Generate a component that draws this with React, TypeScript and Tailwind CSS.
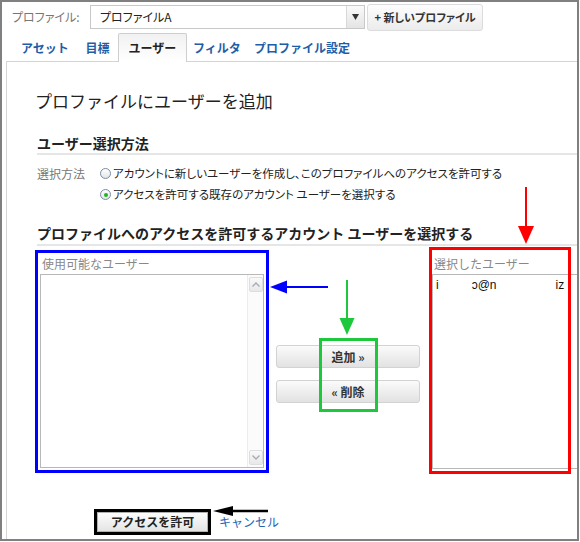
import React from "react";

function Radio({ checked }: { checked?: boolean }) {
  return (
    <span className="flex h-[11px] w-[11px] shrink-0 items-center justify-center rounded-full border border-[#7b8ca3] bg-linear-to-b from-white to-[#e2e5e9]">
      {checked && <span className="h-[4px] w-[4px] rounded-full bg-[#1fb51f]" />}
    </span>
  );
}

function Chevron({ up }: { up?: boolean }) {
  return (
    <svg width="8" height="5" viewBox="0 0 8 5">
      <path
        d={up ? "M0.5 4.5L4 1L7.5 4.5" : "M0.5 0.5L4 4L7.5 0.5"}
        fill="none"
        stroke="#a3acb6"
        strokeWidth="1.3"
      />
    </svg>
  );
}

export default function App() {
  return (
    <div className="h-[542px] w-[580px] bg-white">
      <div className="flex h-[541px] w-[579px] flex-col overflow-hidden border-2 border-[#808080] bg-white font-['Noto_Sans_CJK_JP',sans-serif]">
        {/* header */}
        <div className="flex h-[30px] shrink-0 items-center pl-[10px]">
          <span className="w-[78px] text-[12px] text-[#777] [font-feature-settings:'palt']">プロファイル:</span>
          <div className="flex h-[24px] w-[275px] border border-[#c8c8c8]">
            <div className="flex-1 pl-[9px] text-[12px] leading-[22px] text-[#222] [font-feature-settings:'palt']">プロファイルA</div>
            <div className="flex w-[18px] items-center justify-center border-l border-[#d8d8d8] bg-linear-to-b from-[#fafafa] to-[#e4e4e4]">
              <svg width="7" height="6" viewBox="0 0 7 6">
                <path d="M0 0h7L3.5 6z" fill="#333" />
              </svg>
            </div>
          </div>
          <button className="ml-[2px] h-[27px] w-[116px] rounded-[3px] border border-[#dcdcdc] bg-linear-to-b from-[#fdfdfd] to-[#ececec] text-[11px] font-bold text-[#333] [font-feature-settings:'palt']">
            + 新しいプロファイル
          </button>
        </div>

        {/* tabs */}
        <div className="relative z-10 -mb-px flex h-[30px] shrink-0 items-end pl-[11px] text-[12px] font-bold">
          <div className="flex h-[29px] w-[64px] items-center justify-center text-[#1f5ea6]">アセット</div>
          <div className="flex h-[29px] w-[41px] items-center justify-center text-[#1f5ea6]">目標</div>
          <div className="flex h-[29px] w-[69px] items-center justify-center rounded-t-[2px] border border-b-0 border-[#cfcfcf] bg-linear-to-b from-[#f1f1f1] to-white text-[#222]">ユーザー</div>
          <div className="flex h-[29px] w-[60px] items-center justify-center text-[#1f5ea6]">フィルタ</div>
          <div className="flex h-[29px] w-[110px] items-center justify-center text-[#1f5ea6]">プロファイル設定</div>
        </div>

        {/* panel */}
        <div className="ml-[4px] flex flex-1 flex-col border-l border-t border-[#d4d4d4] pl-[28px]">
          <div className="mt-[27px] text-[17px] leading-[24px] text-[#222]">プロファイルにユーザーを追加</div>

          <div className="mt-[20px] ml-[2px] border-b-2 border-[#e6e6e6] text-[14px] font-bold leading-[20px] text-[#222]">ユーザー選択方法</div>

          <div className="mt-[8px] ml-[2px] flex h-[21px] items-center text-[12px]">
            <span className="w-[63px] text-[#777]">選択方法</span>
            <Radio />
            <span className="ml-[2px] text-[11.5px] text-[#222] [font-feature-settings:'palt']">アカウントに新しいユーザーを作成し、このプロファイルへのアクセスを許可する</span>
          </div>
          <div className="ml-[65px] flex h-[21px] items-center text-[12px]">
            <Radio checked />
            <span className="ml-[2px] text-[11.5px] text-[#222] [font-feature-settings:'palt']">アクセスを許可する既存のアカウント ユーザーを選択する</span>
          </div>

          <div className="mt-[18px] ml-[2px] border-b-2 border-[#e6e6e6] text-[14px] font-bold leading-[21px] text-[#222]">プロファイルへのアクセスを許可するアカウント ユーザーを選択する</div>

          {/* boxes */}
          <div className="mt-[4px] flex">
            {/* available users */}
            <div className="flex h-[223px] w-[234px] shrink-0 flex-col border-[3px] border-[#0000ff]">
              <div className="pl-[4px] text-[12px] leading-[21px] text-[#888]">使用可能なユーザー</div>
              <div className="ml-[2px] flex h-[194px] w-[224px] justify-end border border-[#b8b8b8]">
                <div className="flex w-[16px] flex-col items-center justify-between border-l border-[#ececec] bg-[#fbfbfb] py-[2px]">
                  <div className="flex h-[15px] w-[14px] items-center justify-center rounded-[2px] border border-[#dedede] bg-linear-to-b from-[#f9f9f9] to-[#e8e8e8]">
                    <Chevron up />
                  </div>
                  <div className="flex h-[15px] w-[14px] items-center justify-center rounded-[2px] border border-[#dedede] bg-linear-to-b from-[#f9f9f9] to-[#e8e8e8]">
                    <Chevron />
                  </div>
                </div>
              </div>
            </div>

            {/* middle buttons */}
            <div className="relative flex w-[163px] shrink-0 flex-col pt-[95px]">
              <button className="ml-[7px] h-[23px] w-[144px] rounded-[3px] border border-[#d2d2d2] bg-linear-to-b from-[#fbfbfb] to-[#e2e2e2] text-[12px] font-bold text-[#333]">
                追加 »
              </button>
              <button className="ml-[7px] mt-[12px] h-[23px] w-[144px] rounded-[3px] border border-[#d2d2d2] bg-linear-to-b from-[#fbfbfb] to-[#e2e2e2] text-[12px] font-bold text-[#333]">
                « 削除
              </button>

              {/* blue arrow */}
              <svg className="absolute left-0 top-[30px]" width="60" height="14" viewBox="0 0 60 14">
                <line x1="16" y1="7" x2="59" y2="7" stroke="#0000ff" strokeWidth="2" />
                <polygon points="1,7 18,0.5 18,13.5" fill="#0000ff" />
              </svg>
              {/* green arrow */}
              <svg className="absolute left-[70px] top-[30px]" width="16" height="56" viewBox="0 0 16 56">
                <line x1="8" y1="0" x2="8" y2="40" stroke="#1ec83c" strokeWidth="2" />
                <polygon points="0.5,38 15.5,38 8,55" fill="#1ec83c" />
              </svg>
              {/* green box */}
              <div className="absolute left-[50px] top-[88px] h-[74px] w-[59px] border-[3px] border-[#1ec83c]" />
            </div>

            {/* selected users */}
            <div className="relative flex w-[160px] shrink-0 flex-col pt-[3px]">
              <div className="pl-[2px] text-[12px] leading-[21px] text-[#888]">選択したユーザー</div>
              <div className="h-[195px] w-[160px] border border-[#b8b8b8] pl-[3px] pt-[2px]">
                <div className="flex font-['Liberation_Sans',Arial,sans-serif] text-[12px] leading-[16px] text-[#111]">
                  <span>i</span>
                  <span className="ml-[33px]">ɔ@n</span>
                  <span className="ml-[59px]">iz</span>
                </div>
              </div>

              {/* red box */}
              <div className="absolute left-[-3px] top-[-3px] h-[227px] w-[142px] border-[3px] border-[#ff0000]" />
              {/* red arrow */}
              <svg className="absolute left-[85px] top-[-63px]" width="18" height="58" viewBox="0 0 18 58">
                <line x1="9" y1="0" x2="9" y2="41" stroke="#ff0000" strokeWidth="2" />
                <polygon points="1,39 17,39 9,57" fill="#ff0000" />
              </svg>
            </div>
          </div>

          {/* bottom */}
          <div className="relative mt-[36px] ml-[59px] flex items-center">
            <div className="flex h-[26px] w-[117px] border-[3px] border-black">
              <button className="h-full w-full border border-[#b0b0b0] bg-linear-to-b from-[#fdfdfd] to-[#e4e4e4] text-[12px] font-bold text-[#222]">
                アクセスを許可
              </button>
            </div>
            <span className="ml-[8px] text-[12px] text-[#2366b5]">キャンセル</span>

            {/* black arrow */}
            <svg className="absolute left-[119px] top-[-4px]" width="56" height="12" viewBox="0 0 56 12">
              <line x1="18" y1="6" x2="55" y2="6" stroke="#000" strokeWidth="2.5" />
              <polygon points="0,6 20,1 20,11" fill="#000" />
            </svg>
          </div>
        </div>
      </div>
    </div>
  );
}
